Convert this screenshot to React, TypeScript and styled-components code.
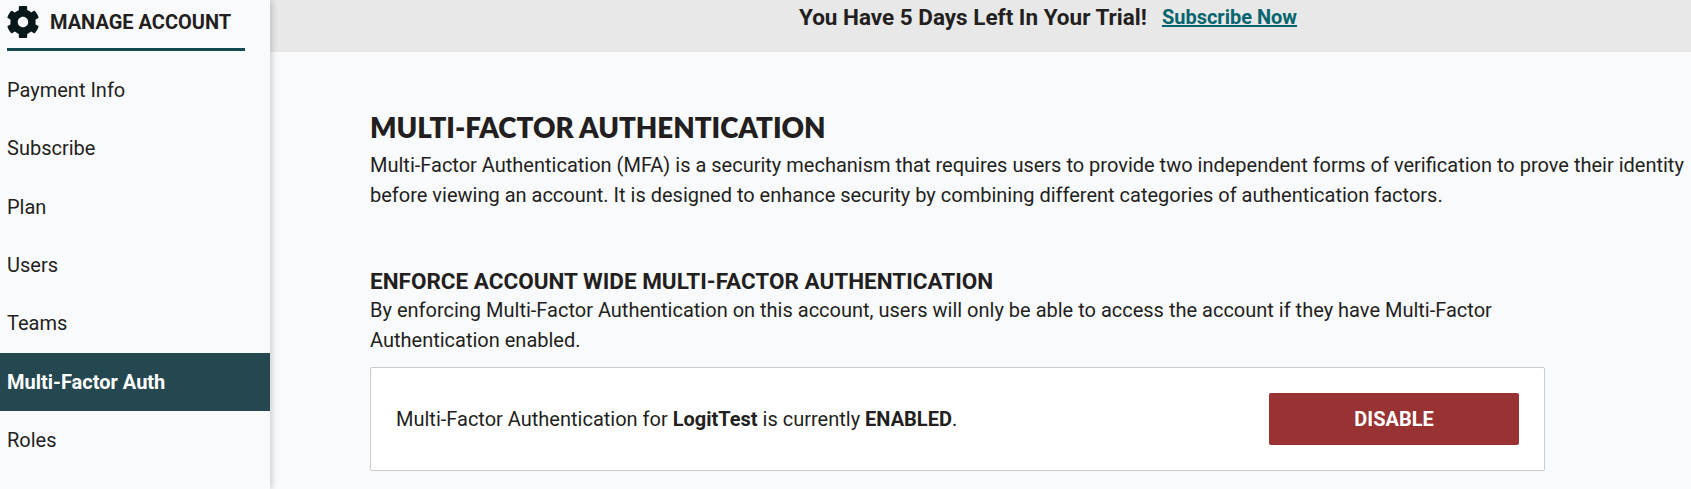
import { createGlobalStyle, styled } from 'styled-components';

const items = ['Payment Info', 'Subscribe', 'Plan', 'Users', 'Teams', 'Multi-Factor Auth', 'Roles'];

const GlobalStyle = createGlobalStyle`
	html, body {
		margin: 0;
		height: 100%;
		overflow: hidden;
		background: #f9fafc;
	}
	body {
		font-family: Roboto, "Liberation Sans", sans-serif;
		color: #231f20;
	}
`;

const GearIcon = () => (
	<svg width="32" height="32" viewBox="16 12 480 488" fill="#07181a">
		<path d="M487.4 315.7l-42.6-24.6c4.3-23.2 4.3-47 0-70.2l42.6-24.6c4.9-2.8 7.1-8.6 5.5-14-11.1-35.6-30-67.8-54.7-94.6-3.8-4.1-10-5.1-14.8-2.3L380.8 110c-17.9-15.4-38.5-27.3-60.8-35.1V25.8c0-5.6-3.9-10.5-9.4-11.7-36.7-8.2-74.3-7.8-109.2 0-5.5 1.2-9.4 6.1-9.4 11.7V75c-22.2 7.9-42.8 19.8-60.8 35.1L88.7 85.5c-4.9-2.8-11-1.9-14.8 2.3-24.7 26.7-43.6 58.9-54.7 94.6-1.7 5.4.6 11.2 5.5 14L67.3 221c-4.3 23.2-4.3 47 0 70.2l-42.6 24.6c-4.9 2.8-7.1 8.6-5.5 14 11.1 35.6 30 67.8 54.7 94.6 3.8 4.1 10 5.1 14.8 2.3l42.6-24.6c17.9 15.4 38.5 27.3 60.8 35.1v49.2c0 5.6 3.9 10.5 9.4 11.7 36.7 8.2 74.3 7.8 109.2 0 5.5-1.2 9.4-6.1 9.4-11.7v-49.2c22.2-7.9 42.8-19.8 60.8-35.1l42.6 24.6c4.9 2.8 11 1.9 14.8-2.3 24.7-26.7 43.6-58.9 54.7-94.6 1.5-5.5-.7-11.3-5.6-14.1zM256 336c-44.1 0-80-35.9-80-80s35.9-80 80-80 80 35.9 80 80-35.9 80-80 80z" />
	</svg>
);

export default function App() {
	return (
		<Page>
			<GlobalStyle />
			<Sidebar>
				<SidebarHeader>
					<GearIcon />
					<span>MANAGE ACCOUNT</span>
				</SidebarHeader>
				<Nav>
					{items.map((item) => (
						<NavItem key={item} $active={item === 'Multi-Factor Auth'}>
							{item}
						</NavItem>
					))}
				</Nav>
			</Sidebar>
			<Main>
				<TrialBanner>
					<strong>You Have 5 Days Left In Your Trial!</strong>
					<SubscribeLink href="#">Subscribe Now</SubscribeLink>
				</TrialBanner>
				<Content>
					<PageTitle>MULTI-FACTOR AUTHENTICATION</PageTitle>
					<Intro>
						Multi-Factor Authentication (MFA) is a security mechanism that requires users to provide two independent forms of verification to prove their identity before viewing an account. It is designed to enhance security by combining different categories of authentication factors.
					</Intro>
					<SectionTitle>ENFORCE ACCOUNT WIDE MULTI-FACTOR AUTHENTICATION</SectionTitle>
					<SectionText>
						By enforcing Multi-Factor Authentication on this account, users will only be able to access the account if they have Multi-Factor Authentication enabled.
					</SectionText>
					<StatusCard>
						<span>
							Multi-Factor Authentication for <b>LogitTest</b> is currently <b>ENABLED</b>.
						</span>
						<DisableButton>DISABLE</DisableButton>
					</StatusCard>
				</Content>
			</Main>
		</Page>
	);
}

const Page = styled.div`
	display: flex;
	width: 1691px;
	height: 489px;
	overflow: hidden;
`;

const Sidebar = styled.aside`
	position: relative;
	z-index: 1;
	flex: 0 0 270px;
	background: #f9fafc;
	box-shadow: 2px 0 6px rgba(0, 0, 0, 0.18);
`;

const SidebarHeader = styled.div`
	display: flex;
	align-items: center;
	gap: 11px;
	box-sizing: border-box;
	width: 238px;
	height: 51px;
	margin-left: 7px;
	padding-bottom: 4px;
	border-bottom: 3px solid #134a50;
	font-size: 20px;
	font-weight: 700;
`;

const Nav = styled.nav`
	display: flex;
	flex-direction: column;
	margin-top: 9.6px;
`;

const NavItem = styled.div<{ $active?: boolean }>`
	display: flex;
	align-items: center;
	height: 58.4px;
	padding-left: 7px;
	font-size: 20px;
	font-weight: ${(p) => (p.$active ? 700 : 400)};
	color: ${(p) => (p.$active ? '#ffffff' : '#231f20')};
	background: ${(p) => (p.$active ? '#25474f' : 'transparent')};
`;

/* wider than the window: the original page runs off the right edge */
const Main = styled.main`
	flex: 0 0 1556px;
`;

const TrialBanner = styled.div`
	display: flex;
	justify-content: center;
	align-items: flex-start;
	gap: 15px;
	height: 52px;
	padding-top: 4px;
	box-sizing: border-box;
	background: #e8e8e8;
	font-size: 22.5px;
	line-height: 26px;
`;

const SubscribeLink = styled.a`
	font-size: 20px;
	font-weight: 700;
	color: #04656f;
`;

const Content = styled.div`
	padding: 59px 0 0 100px;
`;

const PageTitle = styled.h1`
	margin: 0;
	font-family: Lato, sans-serif;
	font-size: 27.7px;
	font-weight: 800;
	line-height: 34px;
`;

const Intro = styled.p`
	margin: 5px 0 0;
	width: 1330px;
	font-size: 20px;
	line-height: 30px;
`;

const SectionTitle = styled.h2`
	margin: 57px 0 0;
	font-size: 22.5px;
	font-weight: 700;
	line-height: 28px;
`;

const SectionText = styled.p`
	margin: 0;
	width: 1174px;
	font-size: 20px;
	line-height: 30px;
`;

const StatusCard = styled.div`
	display: flex;
	align-items: center;
	justify-content: space-between;
	box-sizing: border-box;
	width: 1175px;
	height: 104px;
	margin-top: 12px;
	padding: 0 25px;
	background: #ffffff;
	border: 1px solid #cccccc;
	border-radius: 2px;
	font-size: 20px;
`;

const DisableButton = styled.button`
	width: 250px;
	height: 52px;
	border: none;
	border-radius: 2px;
	background: #983233;
	color: #ffffff;
	font-family: inherit;
	font-size: 20px;
	font-weight: 700;
`;
